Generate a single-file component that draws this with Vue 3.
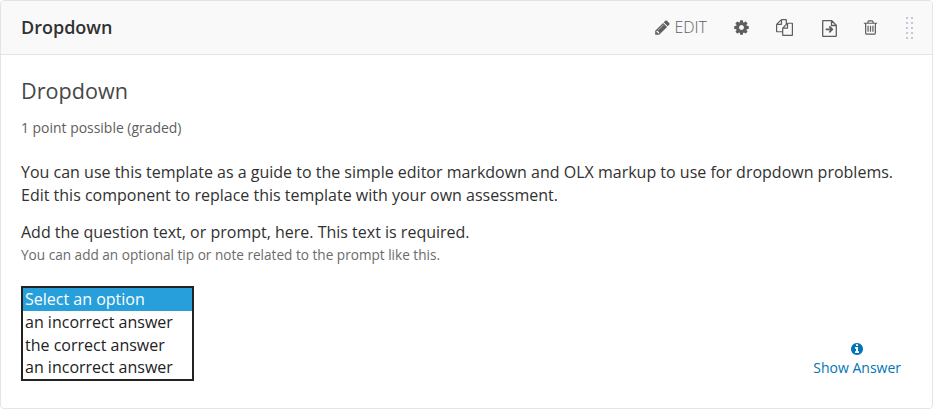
<script setup>
const options = [
  'Select an option',
  'an incorrect answer',
  'the correct answer',
  'an incorrect answer',
]
</script>

<template>
  <section class="card">
    <header class="head">
      <span class="name">Dropdown</span>
      <div class="actions">
        <a class="edit">
          <svg class="fa" viewBox="0 0 1792 1792"><path d="M491 1536l91-91-235-235-91 91v107h128v128h107zm523-928q0-22-22-22-10 0-17 7l-542 542q-7 7-7 17 0 22 22 22 10 0 17-7l542-542q7-7 7-17zm-54-192l416 416-832 832h-416v-416zm683 96q0 53-37 90l-166 166-416-416 166-165q36-38 90-38 53 0 91 38l235 234q37 39 37 91z" /></svg>
          <span class="edit-label">EDIT</span>
        </a>
        <svg class="fa cog" viewBox="0 0 1792 1792"><path d="M1152 896q0-106-75-181t-181-75-181 75-75 181 75 181 181 75 181-75 75-181zm512-109v222q0 12-8 23t-20 13l-185 28q-19 54-39 91 35 50 107 138 10 12 10 25t-9 23q-27 37-99 108t-94 71q-12 0-26-9l-138-108q-44 23-91 38-16 136-29 186-7 28-36 28h-222q-14 0-24.500-8.500t-11.500-21.500l-28-184q-49-16-90-37l-141 107q-10 9-25 9-14 0-25-11-126-114-165-168-7-10-7-23 0-12 8-23 15-21 51-66.500t54-70.500q-27-50-41-99l-183-27q-13-2-21-12.500t-8-23.500v-222q0-12 8-23t19-13l186-28q14-46 39-92-40-57-107-138-10-12-10-24 0-10 9-23 26-36 98.500-107.500t94.500-71.500q13 0 26 10l138 107q44-23 91-38 16-136 29-186 7-28 36-28h222q14 0 24.500 8.500t11.500 21.500l28 184q49 16 90 37l142-107q9-9 24-9 13 0 25 10 129 119 165 170 7 8 7 22 0 12-8 23-15 21-51 66.500t-54 70.500q26 50 41 98l183 28q13 2 21 12.500t8 23.500z" /></svg>
        <svg class="fa copy" viewBox="0 0 1792 1792"><path d="M1696 384q40 0 68 28t28 68v1216q0 40-28 68t-68 28h-960q-40 0-68-28t-28-68v-288h-544q-40 0-68-28t-28-68v-672q0-40 20-88t48-76l408-408q28-28 76-48t88-20h416q40 0 68 28t28 68v328q68-40 128-40h416zm-544 213l-299 299h299v-299zm-640-384l-299 299h299v-299zm196 647l316-316v-416h-384v416q0 40-28 68t-68 28h-416v640h512v-256q0-40 20-88t48-76zm956 804v-1152h-384v416q0 40-28 68t-68 28h-416v640h896z" /></svg>
        <svg class="move" viewBox="0 0 15 17" fill="none" stroke="currentColor" stroke-width="1.300">
          <path d="M1.200 .7H9.800L14.300 5.200V15.800Q14.300 16.300 13.800 16.300H1.200Q.7 16.300 .7 15.800V1.200Q.7 .7 1.200 .7ZM9.500 1V5.500H14" />
          <path d="M3.700 9.300H10M7.300 6.300L10.300 9.300L7.300 12.300" stroke-width="1.700" />
        </svg>
        <svg class="fa trash" viewBox="0 0 1792 1792"><path d="M704 736v576q0 14-9 23t-23 9h-64q-14 0-23-9t-9-23v-576q0-14 9-23t23-9h64q14 0 23 9t9 23zm256 0v576q0 14-9 23t-23 9h-64q-14 0-23-9t-9-23v-576q0-14 9-23t23-9h64q14 0 23 9t9 23zm256 0v576q0 14-9 23t-23 9h-64q-14 0-23-9t-9-23v-576q0-14 9-23t23-9h64q14 0 23 9t9 23zm128 724v-948h-896v948q0 22 7 40.500t14.500 27 10.500 8.500h832q3 0 10.500-8.500t14.500-27 7-40.500zm-672-1076h448l-48-117q-7-9-17-11h-317q-10 2-17 11zm928 32v64q0 14-9 23t-23 9h-96v948q0 83-47 143.500t-113 60.500h-832q-66 0-113-58.500t-47-141.500v-952h-96q-14 0-23-9t-9-23v-64q0-14 9-23t23-9h309l70-167q15-37 54-63t79-26h320q40 0 79 26t54 63l70 167h309q14 0 23 9t9 23z" /></svg>
        <span class="drag"><i v-for="n in 10" :key="n"></i></span>
      </div>
    </header>

    <div class="body">
      <h3 class="title">Dropdown</h3>
      <div class="points">1 point possible (graded)</div>
      <p class="intro">You can use this template as a guide to the simple editor markdown and OLX markup to use for dropdown problems.<br>Edit this component to replace this template with your own assessment.</p>
      <p class="prompt">Add the question text, or prompt, here. This text is required.</p>
      <p class="tip">You can add an optional tip or note related to the prompt like this.</p>
      <div class="foot">
        <ul class="list" role="listbox">
          <li v-for="(o, i) in options" :key="i" :class="{ selected: i === 0 }">{{ o }}</li>
        </ul>
        <a class="show">
          <svg class="info" viewBox="0 0 1792 1792"><path d="M1152 1376v-160q0-14-9-23t-23-9h-96v-512q0-14-9-23t-23-9h-320q-14 0-23 9t-9 23v160q0 14 9 23t23 9h96v320h-96q-14 0-23 9t-9 23v160q0 14 9 23t23 9h448q14 0 23-9t9-23zm-128-896v-160q0-14-9-23t-23-9h-192q-14 0-23 9t-9 23v160q0 14 9 23t23 9h192q14 0 23-9t9-23zm640 416q0 209-103 385.500t-279.500 279.500-385.500 103-385.500-103-279.500-279.500-103-385.500 103-385.500 279.500-279.500 385.500-103 385.500 103 279.500 279.500 103 385.500z" /></svg>
          <span>Show Answer</span>
        </a>
      </div>
    </div>
  </section>
</template>

<style>
body { background: #fff; }
</style>

<style scoped>
.card {
  box-sizing: border-box;
  width: 933px;
  height: 409px;
  border: 1px solid #e4e4e4;
  border-radius: 4px;
  overflow: hidden;
  font-family: "Open Sans", sans-serif;
  color: #313131;
}
.head {
  box-sizing: border-box;
  height: 54px;
  padding: 0 19px 1px 20px;
  display: flex;
  align-items: center;
  justify-content: space-between;
  background: #f9f9f9;
  border-bottom: 1px solid #e4e4e4;
}
.name { font-size: 18px; font-weight: 600; line-height: 26px; padding-bottom: 1px; }
.actions { display: flex; align-items: center; color: #5e5e5e; }
.edit { display: flex; align-items: center; gap: 3px; }
.edit-label { font-size: 16px; font-weight: 300; line-height: 24px; padding-bottom: 1px; }
svg { display: block; flex: none; }
.fa { width: 17px; height: 17px; fill: currentColor; }
.cog { margin-left: 26px; }
.copy { margin-left: 26px; }
.move { width: 15px; height: 17px; margin: 3px 0 0 28px; }
.trash { margin-left: 25px; }
.drag {
  display: grid;
  grid-template-columns: 2px 2px;
  grid-auto-rows: 2px;
  gap: 3px;
  margin: 2px 0 0 27px;
}
.drag i { background: #c2c9d8; }
.body { padding: 21px 31px 0 20px; }
h3, p, ul { margin: 0; padding: 0; }
.title { font-size: 21.600px; font-weight: 400; line-height: 30px; color: #474747; }
.points { margin-top: 12px; font-size: 13.950px; line-height: 20px; color: #5e5e5e; }
.intro { margin-top: 23px; font-size: 16px; line-height: 23px; white-space: nowrap; }
.prompt { margin-top: 14px; font-size: 16px; line-height: 23px; }
.tip { font-size: 13.600px; line-height: 22px; color: #6b6b6b; }
.foot { display: flex; justify-content: space-between; align-items: flex-end; margin-top: 20px; }
.list {
  box-sizing: border-box;
  width: 173px;
  height: 95px;
  border: 2px solid #222;
  list-style: none;
  font-size: 16px;
  line-height: 22.800px;
  color: #222;
}
.list li { padding-left: 2px; }
.list .selected { background: #269fdb; color: #fff; }
.show {
  display: flex;
  flex-direction: column;
  align-items: center;
  gap: 2px;
  padding-bottom: 3px;
  font-size: 14px;
  line-height: 20px;
  color: #0075b4;
}
.info { width: 14px; height: 14px; fill: currentColor; }
.edit { margin-right: 0; }
.move { margin-left: 29px; margin-right: 0; }
</style>
